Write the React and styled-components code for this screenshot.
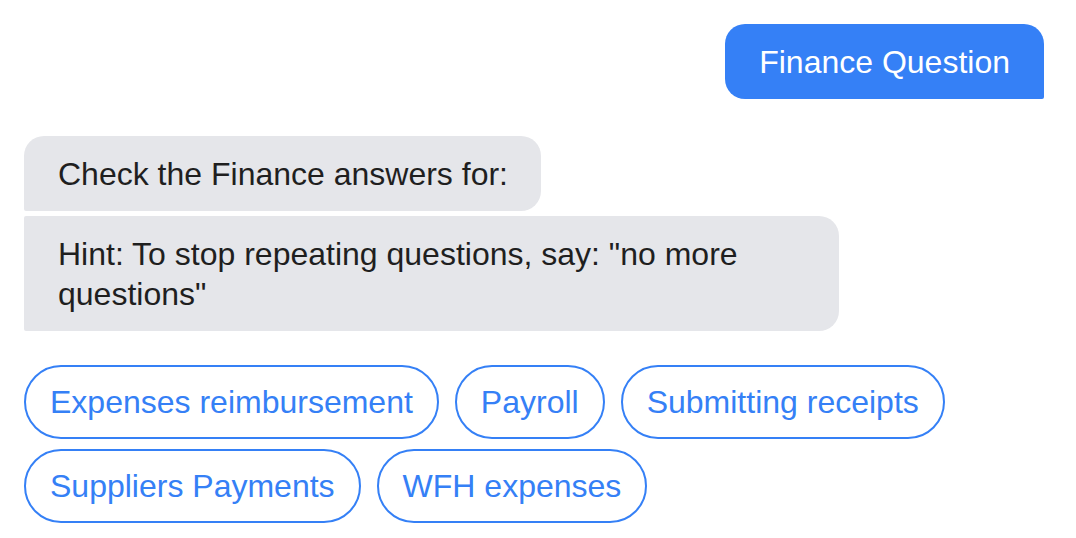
import styled, { createGlobalStyle } from 'styled-components';

const GlobalStyle = createGlobalStyle`
  body {
    margin: 0;
    background: #ffffff;
    font-family: 'Liberation Sans', Arial, Helvetica, sans-serif;
  }
`;

const suggestions = [
  'Expenses reimbursement',
  'Payroll',
  'Submitting receipts',
  'Suppliers Payments',
  'WFH expenses',
];

export default function App() {
  return (
    <>
      <GlobalStyle />
      <Chat>
        <UserRow>
          <UserBubble>Finance Question</UserBubble>
        </UserRow>
        <BotGroup>
          <BotBubble first>Check the Finance answers for:</BotBubble>
          <BotBubble>
            Hint: To stop repeating questions, say: "no more questions"
          </BotBubble>
        </BotGroup>
        <Chips>
          {suggestions.map((s) => (
            <Chip key={s}>{s}</Chip>
          ))}
        </Chips>
      </Chat>
    </>
  );
}

const Chat = styled.div`
  display: flex;
  flex-direction: column;
  padding: 24px 32px 0 24px;
  font-size: 32px;
  line-height: 40px;
`;

const UserRow = styled.div`
  display: flex;
  justify-content: flex-end;
`;

const UserBubble = styled.div`
  background: #3580f6;
  color: #ffffff;
  padding: 17.5px 34px;
  border-radius: 20px 20px 2px 20px;
`;

const BotGroup = styled.div`
  display: flex;
  flex-direction: column;
  align-items: flex-start;
  gap: 5px;
  margin-top: 37px;
`;

const BotBubble = styled.div`
  background: #e5e6ea;
  color: #1f1f1f;
  max-width: 748px;
  padding: 17.5px 33px 17.5px 34px;
  border-radius: ${(p) => (p.first ? '20px 20px 20px 2px' : '2px 20px 20px 2px')};
`;

const Chips = styled.div`
  display: flex;
  flex-wrap: wrap;
  column-gap: 16px;
  row-gap: 10px;
  margin-top: 34px;
  max-width: 960px;
`;

const Chip = styled.button`
  font: inherit;
  color: #3580f6;
  background: #ffffff;
  border: 2px solid #3580f6;
  border-radius: 37px;
  padding: 15px 24px;
  cursor: pointer;
`;
